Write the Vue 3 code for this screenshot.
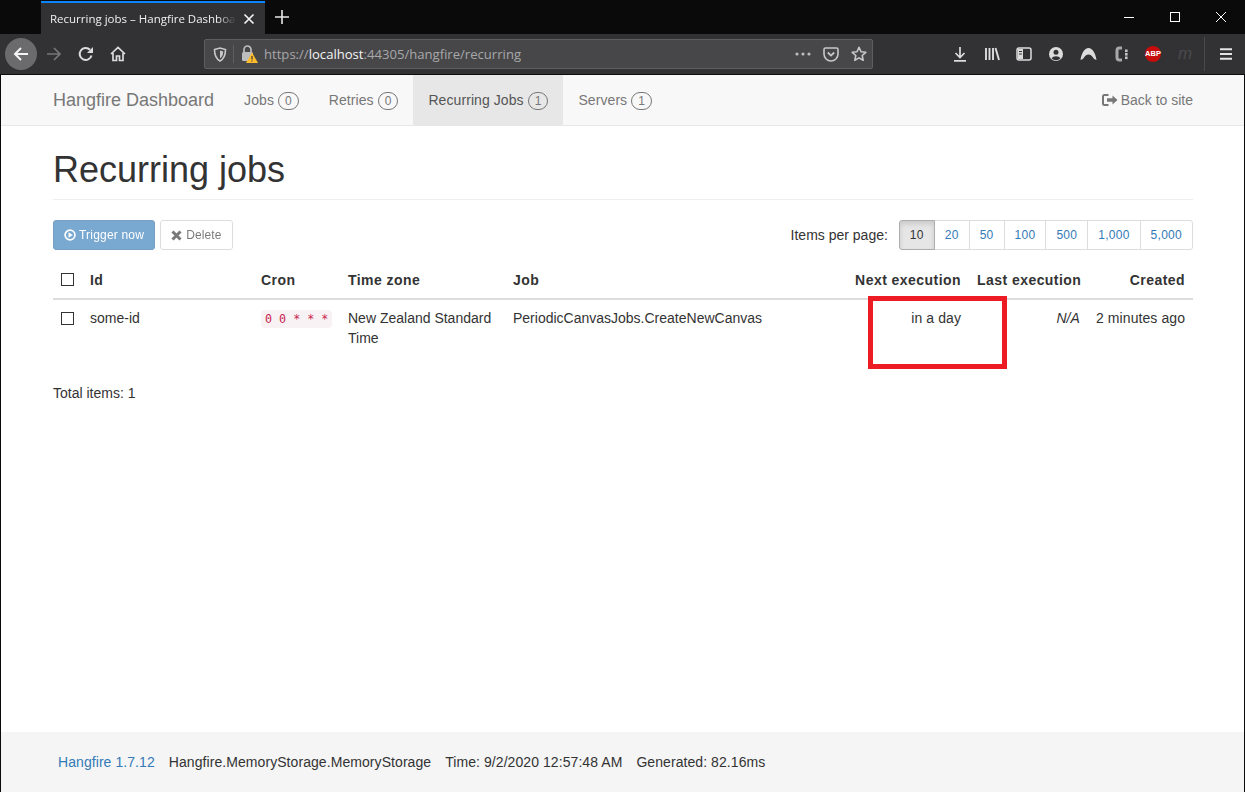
<template>
  <div class="window">
    <div class="tabstrip">
      <div class="tab">
        <span class="tab-title">Recurring jobs – Hangfire Dashboard</span>
        <svg class="tab-close" width="12" height="12" viewBox="0 0 12 12"><path d="M1.5 1.5l9 9M10.5 1.5l-9 9" stroke="#f2f2f2" stroke-width="1.7" /></svg>
      </div>
      <svg class="new-tab" width="14" height="14" viewBox="0 0 14 14"><path d="M7 0v14M0 7h14" stroke="#e8e8e8" stroke-width="1.6" /></svg>
      <div class="win-controls">
        <svg width="12" height="12" viewBox="0 0 12 12"><path d="M1 6.5h10" stroke="#fff" /></svg>
        <svg width="12" height="12" viewBox="0 0 12 12"><rect x="1.5" y="1.5" width="9" height="9" fill="none" stroke="#fff" /></svg>
        <svg width="12" height="12" viewBox="0 0 12 12"><path d="M1 1l10 10M11 1L1 11" stroke="#fff" /></svg>
      </div>
    </div>

    <div class="toolbar">
      <div class="back">
        <svg width="16" height="16" viewBox="0 0 16 16"><path d="M15 8H2M8 2L2 8l6 6" fill="none" stroke="#f4f4f4" stroke-width="2" /></svg>
      </div>
      <svg class="tb-ico fwd" width="16" height="16" viewBox="0 0 16 16"><path d="M1 8h13M8 2l6 6-6 6" fill="none" stroke="#77777a" stroke-width="1.7" /></svg>
      <svg class="tb-ico reload" width="16" height="16" viewBox="0 0 16 16"><path d="M13.5 9.5A6 6 0 1 1 12 3.8" fill="none" stroke="#dcdcdc" stroke-width="2" /><path d="M15 1v6H9z" fill="#dcdcdc" /></svg>
      <svg class="tb-ico home" width="16" height="16" viewBox="0 0 16 16"><path d="M1 8l7-6.5L15 8M3 7v7.5h3.5V10h3v4.500H13V7" fill="none" stroke="#dcdcdc" stroke-width="1.7" /></svg>

      <div class="urlbar">
        <svg width="14" height="15" viewBox="0 0 14 15"><path d="M1.500 2.500L7 1l5.500 1.500c0 5-1 9-5.500 11.500C2.500 11.500 1.500 7.500 1.500 2.500z" fill="none" stroke="#c8c8c8" stroke-width="1.600" /><path d="M7 3.500l3.200.9C10 7.500 9.500 9.600 7 11.200z" fill="#c8c8c8" /></svg>
        <span class="url-sep"></span>
        <svg class="lock" width="18" height="18" viewBox="0 0 18 18">
          <path d="M4 7V4.500a3.500 3.500 0 0 1 7 0V7" fill="none" stroke="#bdbdbd" stroke-width="1.700" />
          <rect x="2" y="7" width="11" height="9" rx="1.500" fill="#bdbdbd" />
          <path d="M12 7.500L18 18H6z" fill="#ffbd2e" />
          <path d="M12 11v3.500M12 15.500v1" stroke="#333" stroke-width="1.200" />
        </svg>
        <span class="url"><span class="url-dim">https://</span><span class="url-host">localhost</span><span class="url-dim">:44305/hangfire/recurring</span></span>
        <div class="url-actions">
          <svg width="16" height="4" viewBox="0 0 16 4"><circle cx="2" cy="2" r="1.600" fill="#bdbdbd" /><circle cx="8" cy="2" r="1.600" fill="#bdbdbd" /><circle cx="14" cy="2" r="1.600" fill="#bdbdbd" /></svg>
          <svg width="16" height="15" viewBox="0 0 16 15"><path d="M1 2.500A1.500 1.500 0 0 1 2.500 1h11A1.500 1.500 0 0 1 15 2.500V7A7 7 0 0 1 1 7z" fill="none" stroke="#c8c8c8" stroke-width="1.600" /><path d="M4.800 5.500L8 8.600l3.200-3.100" fill="none" stroke="#c8c8c8" stroke-width="1.800" /></svg>
          <svg width="16" height="16" viewBox="0 0 16 16"><path d="M8 1.300l2 4.500 4.800.5-3.600 3.200 1 4.800L8 11.900l-4.200 2.400 1-4.800L1.200 6.300 6 5.800z" fill="none" stroke="#c8c8c8" stroke-width="1.600" stroke-linejoin="round" /></svg>
        </div>
      </div>

      <div class="tb-right">
        <svg width="16" height="16" viewBox="0 0 16 16"><path d="M8 1v10M3.500 7L8 11.500 12.500 7M2 14.800h12" fill="none" stroke="#dcdcdc" stroke-width="1.700" /></svg>
        <svg width="16" height="16" viewBox="0 0 16 16"><path d="M2 2v12M5.500 2v12M9 2v12M11.500 2l3.500 12" fill="none" stroke="#dcdcdc" stroke-width="1.900" /></svg>
        <svg width="16" height="14" viewBox="0 0 16 14"><rect x="1" y="1" width="14" height="12" rx="2" fill="none" stroke="#dcdcdc" stroke-width="1.500" /><rect x="2" y="2" width="5" height="10" fill="#dcdcdc" /><path d="M3 4.500h3M3 7h3" stroke="#333" /></svg>
        <svg width="16" height="16" viewBox="0 0 16 16"><circle cx="8" cy="8" r="7" fill="#dcdcdc" /><circle cx="8" cy="6.300" r="2.500" fill="#323234" /><path d="M3.500 12.300a5 3.500 0 0 1 9 0A6 6 0 0 1 3.500 12.300z" fill="#323234" /></svg>
        <svg width="17" height="14" viewBox="0 0 17 14"><path d="M.5 13C1.500 6 4.500 1 8.500 1s7 5 8 12c-1.500-.5-2.500-1-3.500-2.500C11.800 8.700 10.300 7.500 8.500 7.500S5.200 8.700 4 10.500C3 12 2 12.500.5 13z" fill="#dcdcdc" /></svg>
        <svg width="16" height="16" viewBox="0 0 16 16"><path d="M9 2H6.500A2.500 2.500 0 0 0 4 4.500v7A2.500 2.500 0 0 0 6.500 14H9" fill="none" stroke="#a8a8a8" stroke-width="3" /><rect x="12" y="3.500" width="2.600" height="2.600" fill="#c4c4c4" /><rect x="12" y="7" width="2.600" height="2.600" fill="#c4c4c4" /><rect x="12" y="10.500" width="2.600" height="2.600" fill="#c4c4c4" /></svg>
        <span class="abp">ABP</span>
        <span class="m-ico">m</span>
        <span class="tb-sep"></span>
        <svg class="burger" width="14" height="12" viewBox="0 0 14 12"><path d="M1 1.200h12M1 6h12M1 10.800h12" stroke="#e4e4e4" stroke-width="1.900" /></svg>
      </div>
    </div>

    <div class="page">
      <nav class="navbar">
        <a class="brand">Hangfire Dashboard</a>
        <ul class="nav">
          <li v-for="item in navItems" :key="item.label" :class="{ active: item.active }">
            {{ item.label }} <span class="badge">{{ item.count }}</span>
          </li>
        </ul>
        <a class="back-site">
          <svg width="16" height="14" viewBox="0 0 16 14"><path d="M6.500 2H2.500A1.500 1.500 0 0 0 1 3.500v7A1.500 1.500 0 0 0 2.500 12H6.500" fill="none" stroke="#777" stroke-width="2" /><path d="M5 5.200h5.500V2.500L15.500 7l-5 4.500V8.800H5z" fill="#777" /></svg>
          Back to site
        </a>
      </nav>

      <main class="content">
        <h1>Recurring jobs</h1>

        <div class="actions">
          <div class="btns">
            <button class="btn primary">
              <svg width="12" height="12" viewBox="0 0 12 12"><circle cx="6" cy="6" r="4.900" fill="none" stroke="#fff" stroke-width="1.700" /><path d="M4.500 3.300L8.800 6 4.500 8.700z" fill="#fff" /></svg>
              Trigger now
            </button>
            <button class="btn plain">
              <svg width="11" height="11" viewBox="0 0 11 11"><path d="M1.500 1.500l8 8M9.500 1.500l-8 8" stroke="#333" stroke-width="3" /></svg>
              Delete
            </button>
          </div>
          <div class="pager">
            <span class="pager-label">Items per page:</span>
            <div class="pages">
              <a v-for="size in pageSizes" :key="size" :class="{ current: size === '10' }">{{ size }}</a>
            </div>
          </div>
        </div>

        <div class="table-wrap">
          <table>
            <colgroup>
              <col class="c-check" />
              <col class="c-id" />
              <col class="c-cron" />
              <col class="c-tz" />
              <col />
              <col class="c-next" />
              <col class="c-last" />
              <col class="c-created" />
            </colgroup>
            <thead>
              <tr>
                <th><span class="check"></span></th>
                <th>Id</th>
                <th>Cron</th>
                <th>Time zone</th>
                <th>Job</th>
                <th class="right">Next execution</th>
                <th class="right">Last execution</th>
                <th class="right">Created</th>
              </tr>
            </thead>
            <tbody>
              <tr v-for="job in jobs" :key="job.id">
                <td><span class="check"></span></td>
                <td>{{ job.id }}</td>
                <td><code>{{ job.cron }}</code></td>
                <td>{{ job.zone }}</td>
                <td>{{ job.name }}</td>
                <td class="right">{{ job.next }}</td>
                <td class="right"><em>{{ job.last }}</em></td>
                <td class="right">{{ job.created }}</td>
              </tr>
            </tbody>
          </table>
          <div class="highlight"></div>
        </div>

        <p class="total">Total items: 1</p>
      </main>

      <footer class="footer">
        <a>Hangfire 1.7.12</a>
        <span>Hangfire.MemoryStorage.MemoryStorage</span>
        <span>Time: 9/2/2020 12:57:48 AM</span>
        <span>Generated: 82.16ms</span>
      </footer>
    </div>
  </div>
</template>

<script setup>
const navItems = [
  { label: 'Jobs', count: 0 },
  { label: 'Retries', count: 0 },
  { label: 'Recurring Jobs', count: 1, active: true },
  { label: 'Servers', count: 1 }
]

const pageSizes = ['10', '20', '50', '100', '500', '1,000', '5,000']

const jobs = [
  {
    id: 'some-id',
    cron: '0 0 * * *',
    zone: 'New Zealand Standard Time',
    name: 'PeriodicCanvasJobs.CreateNewCanvas',
    next: 'in a day',
    last: 'N/A',
    created: '2 minutes ago'
  }
]
</script>

<style>
html, body {
  margin: 0;
  background: #000;
}
</style>

<style scoped>
.window {
  width: 1245px;
  height: 792px;
  display: flex;
  flex-direction: column;
  overflow: hidden;
  font-family: "Liberation Sans", Arial, sans-serif;
  font-size: 14px;
  line-height: 20px;
  color: #333;
  background: #0a0a0a;
}

/* browser chrome */
.tabstrip {
  height: 34px;
  flex: none;
  display: flex;
  align-items: center;
  background: #0a0a0a;
  box-sizing: border-box;
  padding-left: 41px;
}

.tab {
  width: 224px;
  height: 33px;
  margin-top: 1px;
  box-sizing: border-box;
  border-top: 2px solid #0a84ff;
  background: #323234;
  display: flex;
  align-items: center;
  padding-left: 9px;
  position: relative;
}

.tab-title {
  width: 186px;
  overflow: hidden;
  white-space: nowrap;
  font-family: "Open Sans", "Noto Sans", sans-serif;
  font-size: 11.5px;
  color: #f0f0f0;
  -webkit-mask-image: linear-gradient(to right, #000 90%, transparent);
  mask-image: linear-gradient(to right, #000 90%, transparent);
}

.tab-close {
  margin-left: 7px;
}

.new-tab {
  margin-left: 10px;
}

.win-controls {
  margin-left: auto;
  display: flex;
  gap: 34px;
  padding-right: 18px;
}

.toolbar {
  height: 40px;
  flex: none;
  display: flex;
  align-items: center;
  background: #323234;
  border-bottom: 1px solid #0c0c0d;
}

.back {
  width: 32px;
  height: 32px;
  margin-left: 5px;
  border-radius: 50%;
  background: #6b6b6d;
  display: flex;
  align-items: center;
  justify-content: center;
}

.fwd { margin-left: 9px; }
.reload { margin-left: 16px; }
.home { margin-left: 16px; }

.urlbar {
  width: 669px;
  height: 30px;
  margin-left: 78px;
  box-sizing: border-box;
  display: flex;
  align-items: center;
  padding-left: 8px;
  background: #474749;
  border: 1px solid #5e5e60;
  border-radius: 2px;
}

.url-sep {
  width: 1px;
  height: 18px;
  margin: 0 6px 0 6px;
  background: #5e5e60;
}

.url {
  margin-left: 6px;
  font-family: "Open Sans", "Noto Sans", sans-serif;
  font-size: 13.1px;
  white-space: nowrap;
}

.url-dim { color: #a8a8a9; }
.url-host { color: #f4f4f4; }

.url-actions {
  margin-left: auto;
  display: flex;
  align-items: center;
  gap: 12px;
  padding-right: 5px;
}

.tb-right {
  display: flex;
  align-items: center;
  margin-left: 79px;
}

.tb-right > svg,
.tb-right > span {
  flex: none;
  margin-right: 16px;
}

.abp {
  width: 16px;
  height: 16px;
  border-radius: 50%;
  background: #c70d0c;
  color: #fff;
  font-size: 7.5px;
  font-weight: bold;
  line-height: 16px;
  text-align: center;
}

.tb-right > .m-ico {
  width: 16px;
  margin-right: 0;
  color: #4a4a4c;
  font-style: italic;
  font-size: 17px;
  text-align: center;
}

.tb-right > .tb-sep {
  width: 1px;
  height: 34px;
  margin: 0 14px 0 11px;
  background: #4a4a4c;
}

.tb-right > .burger {
  margin-right: 0;
}

/* page */
.page {
  flex: 1;
  min-height: 0;
  margin-left: 1px;
  margin-right: 1px;
  display: flex;
  flex-direction: column;
  background: #fff;
}

.navbar {
  height: 51px;
  flex: none;
  box-sizing: border-box;
  display: flex;
  align-items: stretch;
  padding: 0 51px 0 52px;
  background: #f8f8f8;
  border-bottom: 1px solid #e7e7e7;
  color: #777;
}

.brand {
  font-size: 18px;
  line-height: 50px;
  margin-right: 15px;
}

.nav {
  display: flex;
  margin: 0;
  padding: 0;
  list-style: none;
}

.nav li {
  padding: 0 15px;
  line-height: 50px;
  letter-spacing: 0.08px;
  white-space: nowrap;
}

.nav li.active {
  background: #e7e7e7;
  color: #555;
}

.badge {
  display: inline-block;
  padding: 2px 6px;
  border: 1px solid #777;
  border-radius: 10px;
  font-size: 12px;
  line-height: 12px;
  text-align: center;
  color: #777;
}

.back-site {
  margin-left: auto;
  line-height: 50px;
  display: flex;
  align-items: center;
  gap: 3px;
}

.content {
  flex: 1;
  padding: 0 51px 0 52px;
}

h1 {
  margin: 24px 0 20px;
  padding-bottom: 9px;
  border-bottom: 1px solid #eee;
  font-size: 36px;
  font-weight: 500;
  line-height: 40px;
  color: #333;
}

.actions {
  display: flex;
  justify-content: space-between;
  align-items: center;
  height: 30px;
}

.btns {
  display: flex;
  gap: 5px;
}

.btn {
  height: 30px;
  box-sizing: border-box;
  padding: 0 10px;
  border: 1px solid #ccc;
  border-radius: 3px;
  display: flex;
  align-items: center;
  gap: 4px;
  font-family: inherit;
  font-size: 12px;
  letter-spacing: 0.13px;
  opacity: 0.65;
}

.btn.primary {
  gap: 3px;
  letter-spacing: 0.2px;
  background: #337ab7;
  border-color: #2e6da4;
  color: #fff;
}

.btn.plain {
  background: #fff;
  color: #333;
}

.pager {
  display: flex;
  align-items: center;
  gap: 11px;
}

.pages {
  display: flex;
}

.pages a {
  height: 30px;
  box-sizing: border-box;
  padding: 0 10px;
  margin-left: -1px;
  background: #fff;
  border: 1px solid #ddd;
  font-size: 12px;
  letter-spacing: 0.27px;
  line-height: 28px;
  color: #337ab7;
}

.pages a:first-child {
  margin-left: 0;
  border-radius: 3px 0 0 3px;
}

.pages a:last-child {
  border-radius: 0 3px 3px 0;
}

.pages a.current {
  position: relative;
  background: #e6e6e6;
  border-color: #adadad;
  color: #333;
  box-shadow: inset 0 3px 5px rgba(0, 0, 0, 0.125);
}

.table-wrap {
  position: relative;
  margin-top: 12px;
}

table {
  width: 100%;
  table-layout: fixed;
  border-collapse: collapse;
}

.c-check { width: 29px; }
.c-id { width: 171px; }
.c-cron { width: 87px; }
.c-tz { width: 165px; }
.c-next { width: 130px; }
.c-last { width: 119px; }
.c-created { width: 105px; }

th, td {
  padding: 8px;
  text-align: left;
  vertical-align: top;
}

th {
  font-weight: bold;
  letter-spacing: 0.45px;
  white-space: nowrap;
  border-bottom: 2px solid #ddd;
}

th:first-child, td:first-child {
  padding-left: 8px;
  padding-right: 0;
}

td {
  height: 54px;
  box-sizing: border-box;
}

th.right, td.right {
  text-align: right;
}

td.right {
  letter-spacing: 0.08px;
}

.check {
  display: block;
  width: 13px;
  height: 13px;
  margin-top: 3px;
  box-sizing: border-box;
  border: 1px solid #333;
  background: #fff;
}

td .check {
  margin-top: 4px;
}

code {
  padding: 2px 4px;
  border-radius: 4px;
  background: #f9f2f4;
  color: #c7254e;
  font-family: "DejaVu Sans Mono", monospace;
  font-size: 11.7px;
  white-space: nowrap;
}

.highlight {
  position: absolute;
  left: 815px;
  top: 34px;
  width: 139px;
  height: 73px;
  box-sizing: border-box;
  border: 5px solid #ed1c24;
  pointer-events: none;
}

.total {
  margin: 27px 0 0;
}

.footer {
  height: 60px;
  flex: none;
  box-sizing: border-box;
  display: flex;
  align-items: center;
  gap: 14px;
  padding-left: 57px;
  background: #f5f5f5;
  color: #333;
  letter-spacing: 0.07px;
}

.footer a {
  color: #337ab7;
}
</style>
